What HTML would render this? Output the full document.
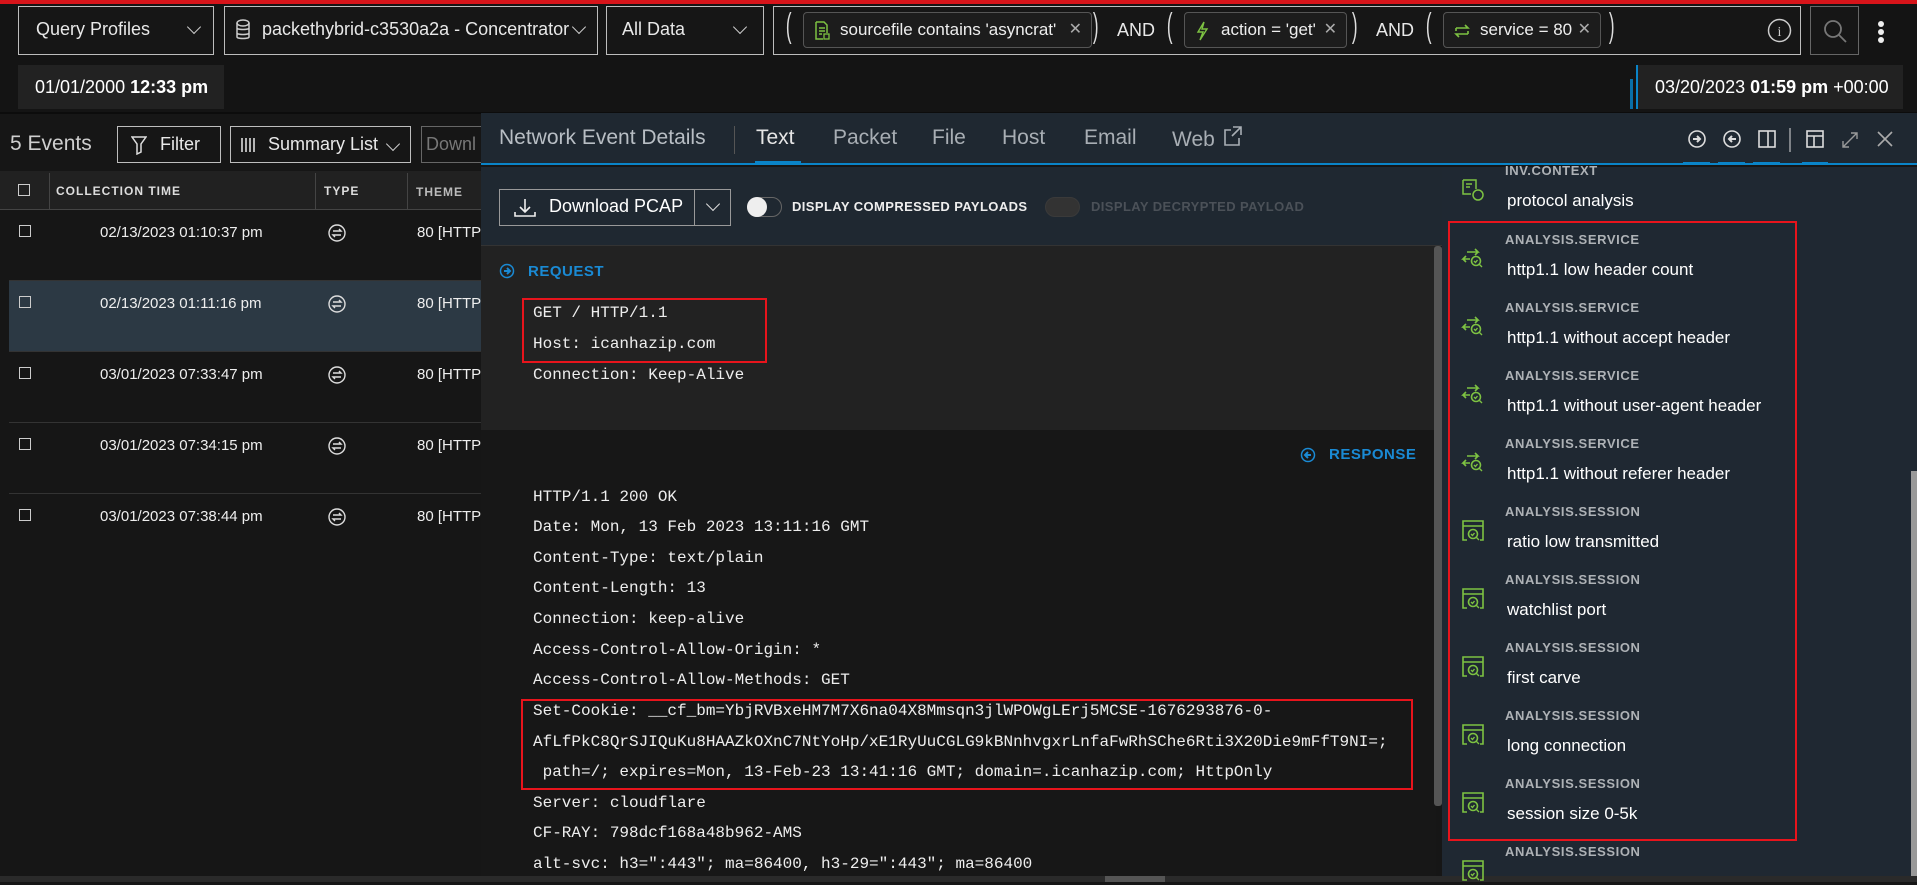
<!DOCTYPE html>
<html><head><meta charset="utf-8"><style>
*{box-sizing:border-box;margin:0;padding:0}
body{width:1917px;height:882px;background:#161616;font-family:"Liberation Sans",sans-serif;color:#e8e8e8;position:relative;overflow:hidden}
.a{position:absolute}
.box{position:absolute;border:1.5px solid #bdbdbd;background:#161616}
.t{position:absolute;white-space:nowrap}
.chev{position:absolute;width:10px;height:10px;border-right:1.5px solid #ccc;border-bottom:1.5px solid #ccc;transform:rotate(45deg)}
.chip{position:absolute;top:12px;height:36px;border:1.5px solid #555;border-radius:4px;background:#1c1c1c;font-size:17px;line-height:33px;padding-left:36px;color:#eee}
.chip .x{position:absolute;right:9px;top:0;color:#aaa;font-size:16px}
.par{position:absolute;top:7px;font-size:34px;font-weight:100;color:#ddd;transform:scaleX(.5)}
.mono{font-family:"Liberation Mono",monospace;font-size:16px;color:#eee;position:absolute;left:533px;white-space:nowrap}
.lab{position:absolute;left:1505px;font-size:13px;font-weight:bold;color:#aeb2b6;letter-spacing:.6px}
.val{position:absolute;left:1507px;font-size:17px;color:#fff}
.row{position:absolute;left:9px;width:472px;height:71px;border-bottom:1px solid #333}
.cb{position:absolute;width:12px;height:12px;border:1.5px solid #ccc}
</style></head><body>
<div class="a" style="left:0;top:0;width:1917px;height:4px;background:#d7141a"></div>
<div class="a" style="left:0;top:4px;width:1917px;height:108px;background:#141414"></div>
<div class="box" style="left:18px;top:6px;width:196px;height:49px"></div>
<div class="t" style="left:36px;top:19px;font-size:18px">Query Profiles</div>
<div class="chev" style="left:189px;top:22px"></div>
<div class="box" style="left:224px;top:6px;width:374px;height:49px"></div>
<svg class="a" style="left:236px;top:19px" width="14" height="22" viewBox="0 0 14 22"><ellipse cx="7" cy="4" rx="6" ry="3" fill="none" stroke="#ccc" stroke-width="1.5"/><path d="M1 4v14c0 2 12 2 12 0V4M1 9c0 2 12 2 12 0M1 14c0 2 12 2 12 0" fill="none" stroke="#ccc" stroke-width="1.5"/></svg>
<div class="t" style="left:262px;top:19px;font-size:18px">packethybrid-c3530a2a - Concentrator</div>
<div class="chev" style="left:574px;top:22px"></div>
<div class="box" style="left:606px;top:6px;width:158px;height:49px"></div>
<div class="t" style="left:622px;top:19px;font-size:18px">All Data</div>
<div class="chev" style="left:735px;top:22px"></div>
<div class="box" style="left:773px;top:6px;width:1028px;height:49px"></div>
<div class="par" style="left:783px">(</div>
<div class="chip" style="left:803px;width:289px">sourcefile contains 'asyncrat'<span class="x">✕</span>
<svg class="a" style="left:10px;top:8px" width="16" height="20" viewBox="0 0 16 20"><path d="M2 1h8l3 3v8M2 1v17h7" fill="none" stroke="#7dc242" stroke-width="1.5"/><path d="M5 7h6M5 10h6M5 13h3" stroke="#7dc242" stroke-width="1.5"/><rect x="10" y="13" width="5" height="5" fill="none" stroke="#7dc242" stroke-width="1.3"/></svg></div>
<div class="par" style="left:1090px">)</div>
<div class="t" style="left:1117px;top:20px;font-size:18px">AND</div>
<div class="par" style="left:1164px">(</div>
<div class="chip" style="left:1184px;width:163px">action = 'get'<span class="x">✕</span>
<svg class="a" style="left:10px;top:8px" width="14" height="20" viewBox="0 0 14 20"><path d="M9 1L3 11h5l-3 8 7-11H7z" fill="none" stroke="#7dc242" stroke-width="1.4"/></svg></div>
<div class="par" style="left:1349px">)</div>
<div class="t" style="left:1376px;top:20px;font-size:18px">AND</div>
<div class="par" style="left:1423px">(</div>
<div class="chip" style="left:1443px;width:158px">service = 80<span class="x">✕</span>
<svg class="a" style="left:9px;top:9px" width="18" height="18" viewBox="0 0 18 18"><path d="M3 6h12l-3-3M15 12H3l3 3" fill="none" stroke="#7dc242" stroke-width="1.6"/><path d="M3 6v3M15 12V9" stroke="#7dc242" stroke-width="1.6"/></svg></div>
<div class="par" style="left:1606px">)</div>
<svg class="a" style="left:1767px;top:18px" width="25" height="25"><circle cx="12.5" cy="12.5" r="11" fill="none" stroke="#ccc" stroke-width="1.5"/><text x="12.5" y="18" font-size="14" fill="#ccc" text-anchor="middle" font-family="Liberation Serif">i</text></svg>
<div class="box" style="left:1810px;top:6px;width:49px;height:49px;border-color:#666"></div>
<svg class="a" style="left:1822px;top:18px" width="26" height="26"><circle cx="11" cy="11" r="8" fill="none" stroke="#777" stroke-width="1.8"/><path d="M17 17l7 7" stroke="#777" stroke-width="1.8"/></svg>
<div class="a" style="left:1878px;top:21px;width:6px;height:6px;border-radius:3px;background:#eee;box-shadow:0 8px #eee,0 16px #eee"></div>
<div class="a" style="left:18px;top:65px;width:206px;height:44px;background:#222"></div>
<div class="t" style="left:35px;top:77px;font-size:18px;color:#fff">01/01/2000 <b>12:33 pm</b></div>
<div class="a" style="left:1636px;top:65px;width:267px;height:44px;background:#222;border-left:2px solid #0a84c8"></div>
<div class="a" style="left:1630px;top:79px;width:3px;height:30px;background:#0a6fa8"></div>
<div class="t" style="left:1655px;top:77px;font-size:18px;color:#fff">03/20/2023 <b>01:59 pm</b> +00:00</div>
<div class="a" style="left:0;top:112px;width:1917px;height:2px;background:#0c0c0c"></div>
<div class="t" style="left:10px;top:132px;font-size:21px;color:#cfcfcf">5 Events</div>
<div class="box" style="left:117px;top:126px;width:104px;height:37px"></div>
<svg class="a" style="left:131px;top:135px" width="16" height="20"><path d="M1 2h14l-5 7v8l-4 2V9z" fill="none" stroke="#ddd" stroke-width="1.5"/></svg>
<div class="t" style="left:160px;top:134px;font-size:18px">Filter</div>
<div class="box" style="left:230px;top:126px;width:181px;height:37px"></div>
<svg class="a" style="left:240px;top:136px" width="18" height="18"><path d="M2 2v14M6 2v14M10 2v14M14 2v14" stroke="#ddd" stroke-width="1.6"/></svg>
<div class="t" style="left:268px;top:134px;font-size:18px">Summary List</div>
<div class="chev" style="left:388px;top:139px"></div>
<div class="box" style="left:421px;top:126px;width:70px;height:37px;border-color:#666"></div>
<div class="t" style="left:426px;top:134px;font-size:18px;color:#777">Downl</div>
<div class="a" style="left:0;top:171px;width:481px;height:39px;background:#212121;border-bottom:1px solid #444"></div>
<div class="a" style="left:49px;top:173px;width:1px;height:37px;background:#444"></div>
<div class="a" style="left:315px;top:173px;width:1px;height:37px;background:#444"></div>
<div class="a" style="left:407px;top:173px;width:1px;height:37px;background:#444"></div>
<div class="cb" style="left:18px;top:184px"></div>
<div class="t" style="left:56px;top:184px;font-size:12px;font-weight:bold;letter-spacing:1px;color:#ddd">COLLECTION TIME</div>
<div class="t" style="left:324px;top:184px;font-size:12px;font-weight:bold;letter-spacing:1px;color:#ddd">TYPE</div>
<div class="t" style="left:416px;top:185px;font-size:12px;font-weight:bold;letter-spacing:1px;color:#bbb">THEME</div>
<div class="row" style="top:210px"></div>
<div class="row" style="top:281px;background:#2c3944"></div>
<div class="row" style="top:352px"></div>
<div class="row" style="top:423px"></div>
<div class="row" style="top:494px;border:none"></div>
<div id="rows"></div>
<div class="a" style="left:481px;top:113px;width:1436px;height:52px;background:#1f2831;border-bottom:2px solid #0a84c8"></div>
<div class="t" style="left:499px;top:126px;font-size:21px;color:#b8bec4">Network Event Details</div>
<div class="a" style="left:734px;top:126px;width:1px;height:28px;background:#555"></div>
<div class="t" style="left:756px;top:126px;font-size:21px;color:#e6e6e6">Text</div>
<div class="a" style="left:755px;top:161px;width:46px;height:3px;background:#0a84c8"></div>
<div class="t" style="left:833px;top:126px;font-size:21px;color:#a8aeb4">Packet</div>
<div class="t" style="left:932px;top:126px;font-size:21px;color:#a8aeb4">File</div>
<div class="t" style="left:1002px;top:126px;font-size:21px;color:#a8aeb4">Host</div>
<div class="t" style="left:1084px;top:126px;font-size:21px;color:#a8aeb4">Email</div>
<div class="t" style="left:1172px;top:128px;font-size:21px;color:#a8aeb4">Web</div>
<svg class="a" style="left:1223px;top:125px" width="20" height="22"><path d="M8 5H2v15h14v-7M10 2h8v8M18 2l-9 9" fill="none" stroke="#a8aeb4" stroke-width="1.6"/></svg>
<svg class="a" style="left:1686px;top:128px" width="220" height="24">
<circle cx="11" cy="11" r="8" fill="none" stroke="#ddd" stroke-width="1.6"/><path d="M7 11h7M11 8l3 3-3 3" stroke="#ddd" stroke-width="2" fill="none"/>
<circle cx="46" cy="11" r="8" fill="none" stroke="#ddd" stroke-width="1.6"/><path d="M50 11h-7M46 8l-3 3 3 3" stroke="#ddd" stroke-width="2" fill="none"/>
<rect x="73" y="3" width="16" height="16" fill="none" stroke="#ddd" stroke-width="1.6"/><path d="M82 3v16" stroke="#ddd" stroke-width="1.6"/>
<path d="M104 0v24" stroke="#ddd" stroke-width="1"/>
<rect x="121" y="3" width="16" height="16" fill="none" stroke="#ddd" stroke-width="1.6"/><path d="M121 8h16M128 8v11" stroke="#ddd" stroke-width="1.6"/>
<path d="M157 19l14-14M157 13v6h6M171 11V5h-6" stroke="#999" stroke-width="1.4" fill="none"/>
<path d="M192 4l14 14M206 4l-14 14" stroke="#aaa" stroke-width="1.6"/>
</svg>
<div class="a" style="left:1683px;top:162px;width:27px;height:3px;background:#0a84c8"></div>
<div class="a" style="left:1718px;top:162px;width:27px;height:3px;background:#0a84c8"></div>
<div class="a" style="left:1753px;top:162px;width:27px;height:3px;background:#0a84c8"></div>
<div class="a" style="left:1802px;top:162px;width:26px;height:3px;background:#0a84c8"></div>
<div class="a" style="left:481px;top:167px;width:961px;height:79px;background:#1f2831;border-bottom:1px solid #333"></div>
<div class="a" style="left:499px;top:189px;width:232px;height:37px;border:1px solid #999"></div>
<div class="a" style="left:694px;top:189px;width:1px;height:37px;background:#999"></div>
<svg class="a" style="left:513px;top:197px" width="24" height="22"><path d="M12 2v13M7 10l5 5 5-5M2 15v4h20v-4" fill="none" stroke="#eee" stroke-width="1.6"/></svg>
<div class="t" style="left:549px;top:196px;font-size:18px;color:#fff">Download PCAP</div>
<div class="chev" style="left:708px;top:199px;border-color:#ddd"></div>
<div class="a" style="left:747px;top:197px;width:35px;height:20px;border-radius:10px;border:1px solid #666"></div>
<div class="a" style="left:747px;top:197px;width:20px;height:20px;border-radius:10px;background:#eee"></div>
<div class="t" style="left:792px;top:199px;font-size:13px;font-weight:bold;color:#eee;letter-spacing:.4px">DISPLAY COMPRESSED PAYLOADS</div>
<div class="a" style="left:1045px;top:197px;width:35px;height:20px;border-radius:10px;background:#333;border:1px solid #3a3a3a"></div>
<div class="t" style="left:1091px;top:199px;font-size:13px;font-weight:bold;color:#4b5158;letter-spacing:.4px">DISPLAY DECRYPTED PAYLOAD</div>
<div class="a" style="left:481px;top:246px;width:955px;height:184px;background:#222"></div>
<div class="a" style="left:481px;top:430px;width:955px;height:448px;background:#171717"></div>
<div class="a" style="left:1434px;top:246px;width:8px;height:560px;background:#555;border-radius:3px"></div>
<svg class="a" style="left:499px;top:262px" width="16" height="18"><circle cx="8" cy="9" r="6.5" fill="none" stroke="#1a8ad4" stroke-width="1.5"/><path d="M5 9h5M8 6l3 3-3 3" stroke="#1a8ad4" stroke-width="2" fill="none"/></svg>
<div class="t" style="left:528px;top:263px;font-size:15px;font-weight:bold;color:#1a8ad4;letter-spacing:.5px">REQUEST</div>
<div class="mono" style="top:304px">GET / HTTP/1.1</div>
<div class="mono" style="top:335px">Host: icanhazip.com</div>
<div class="mono" style="top:366px">Connection: Keep-Alive</div>
<div class="a" style="left:522px;top:298px;width:245px;height:65px;border:2px solid #e8141c"></div>
<svg class="a" style="left:1300px;top:446px" width="16" height="18"><circle cx="8" cy="9" r="6.5" fill="none" stroke="#1a8ad4" stroke-width="1.5"/><path d="M11 9H6M8 6L5 9l3 3" stroke="#1a8ad4" stroke-width="2" fill="none"/></svg>
<div class="t" style="left:1329px;top:446px;font-size:15px;font-weight:bold;color:#1a8ad4;letter-spacing:.5px">RESPONSE</div>
<div class="mono" style="top:488px">HTTP/1.1 200 OK</div>
<div class="mono" style="top:518px">Date: Mon, 13 Feb 2023 13:11:16 GMT</div>
<div class="mono" style="top:549px">Content-Type: text/plain</div>
<div class="mono" style="top:579px">Content-Length: 13</div>
<div class="mono" style="top:610px">Connection: keep-alive</div>
<div class="mono" style="top:641px">Access-Control-Allow-Origin: *</div>
<div class="mono" style="top:671px">Access-Control-Allow-Methods: GET</div>
<div class="mono" style="top:702px">Set-Cookie: __cf_bm=YbjRVBxeHM7M7X6na04X8Mmsqn3jlWPOWgLErj5MCSE-1676293876-0-</div>
<div class="mono" style="top:733px">AfLfPkC8QrSJIQuKu8HAAZkOXnC7NtYoHp/xE1RyUuCGLG9kBNnhvgxrLnfaFwRhSChe6Rti3X20Die9mFfT9NI=;</div>
<div class="mono" style="top:763px">&nbsp;path=/; expires=Mon, 13-Feb-23 13:41:16 GMT; domain=.icanhazip.com; HttpOnly</div>
<div class="mono" style="top:794px">Server: cloudflare</div>
<div class="mono" style="top:824px">CF-RAY: 798dcf168a48b962-AMS</div>
<div class="mono" style="top:855px">alt-svc: h3=":443"; ma=86400, h3-29=":443"; ma=86400</div>
<div class="a" style="left:521px;top:699px;width:892px;height:91px;border:2px solid #e8141c"></div>
<div class="a" style="left:0;top:876px;width:1917px;height:6px;background:#2a2a2a"></div>
<div class="a" style="left:1105px;top:876px;width:60px;height:6px;background:#555"></div>
<div class="a" style="left:1442px;top:167px;width:475px;height:709px;background:#1f2832"></div>
<div class="a" style="left:1911px;top:471px;width:6px;height:405px;background:#999"></div>
<div id="side"></div>
<div class="a" style="left:1448px;top:221px;width:349px;height:620px;border:2px solid #e8141c"></div>
<script>
var r=document.getElementById('rows'),h='';
['02/13/2023 01:10:37 pm','02/13/2023 01:11:16 pm','03/01/2023 07:33:47 pm','03/01/2023 07:34:15 pm','03/01/2023 07:38:44 pm'].forEach(function(d,i){var y=210+71*i;
h+='<div class="cb" style="left:19px;top:'+(y+15)+'px"></div><div class="t" style="left:100px;top:'+(y+14)+'px;font-size:15px;color:#eee">'+d+'</div>'+
'<svg class="a" style="left:328px;top:'+(y+14)+'px" width="18" height="18"><circle cx="9" cy="9" r="8" fill="none" stroke="#ddd" stroke-width="1.4"/><path d="M5 7h8l-2-2M13 11H5l2 2" stroke="#ddd" stroke-width="1.4" fill="none"/></svg>'+
'<div class="t" style="left:417px;top:'+(y+14)+'px;font-size:15px;color:#eee">80 [HTTP</div>';});
r.innerHTML=h;
var s=document.getElementById('side'),g='';
var it=[['INV.CONTEXT','protocol analysis',0],['ANALYSIS.SERVICE','http1.1 low header count',1],['ANALYSIS.SERVICE','http1.1 without accept header',1],['ANALYSIS.SERVICE','http1.1 without user-agent header',1],['ANALYSIS.SERVICE','http1.1 without referer header',1],['ANALYSIS.SESSION','ratio low transmitted',2],['ANALYSIS.SESSION','watchlist port',2],['ANALYSIS.SESSION','first carve',2],['ANALYSIS.SESSION','long connection',2],['ANALYSIS.SESSION','session size 0-5k',2],['ANALYSIS.SESSION','',2]];
var ic=['<path d="M2 2h13v9M2 2v14h8M5 6h6M5 9h4" fill="none" stroke="#7dc242" stroke-width="1.5"/><circle cx="17" cy="17" r="5" fill="none" stroke="#7dc242" stroke-width="1.5"/>',
'<path d="M6 5h11l-3-3M17 5l-3 3M9 12H2l3-3M2 12l3 3" fill="none" stroke="#7dc242" stroke-width="1.6"/><circle cx="15" cy="14" r="4.5" fill="none" stroke="#7dc242" stroke-width="1.6"/><path d="M18 17l3 3M13 14l1.5 1.5 2-2.5" fill="none" stroke="#7dc242" stroke-width="1.4"/>',
'<path d="M2 7V2h20v14M2 7h20M2 7v14h4M22 16v5h-3" fill="none" stroke="#7dc242" stroke-width="1.6"/><circle cx="12" cy="15" r="4.5" fill="none" stroke="#7dc242" stroke-width="1.6"/><path d="M15 18l3 3M10 15l1.5 1.5 2-2.5" fill="none" stroke="#7dc242" stroke-width="1.4"/>'];
it.forEach(function(a,i){var y=(i==0)?172:241+68*(i-1);
g+='<div class="lab" style="top:'+(y-9)+'px">'+a[0]+'</div><div class="val" style="top:'+(y+19)+'px">'+a[1]+'</div><svg class="a" style="left:1461px;top:'+(y+6)+'px" width="26" height="26">'+ic[a[2]]+'</svg>';});
s.innerHTML=g;
</script>
</body></html>
